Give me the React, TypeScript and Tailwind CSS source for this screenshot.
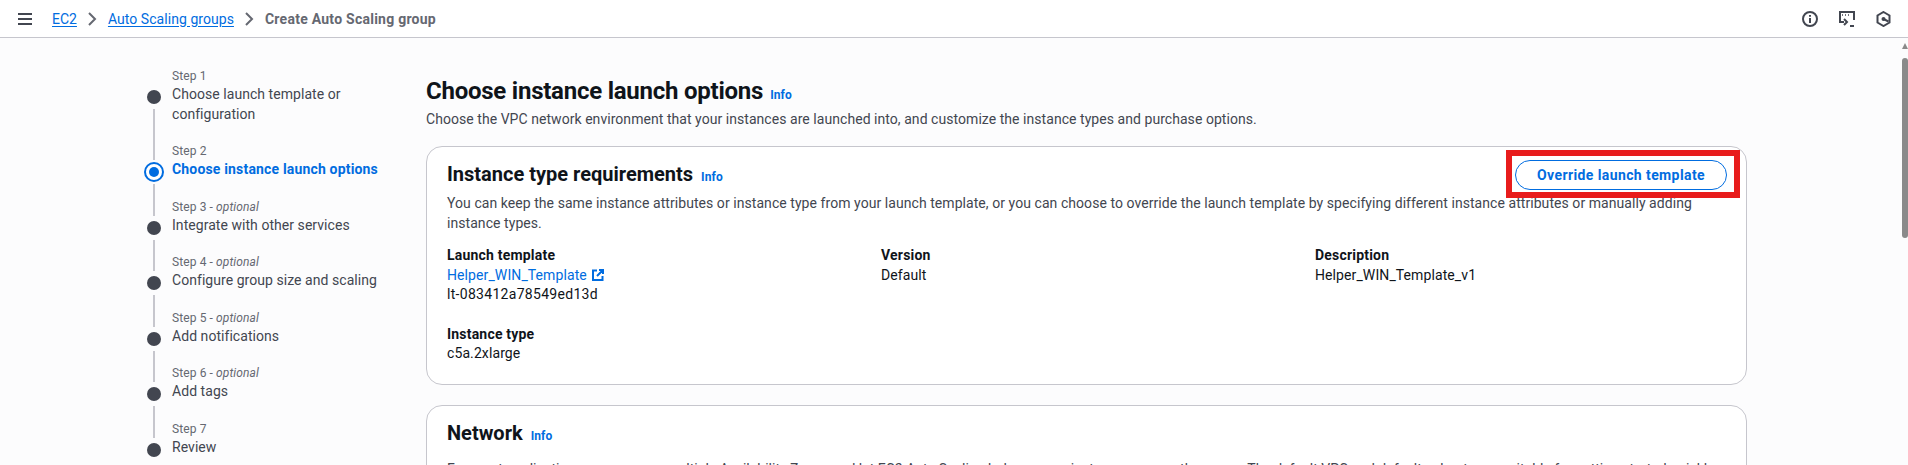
import React from "react";

const Line = ({ hidden }: { hidden?: boolean }) => (
  <div className={hidden ? "w-[2px] flex-1" : "w-[2px] flex-1 bg-[#c6c6cd]"} />
);

type Step = { n: number; optional?: boolean; title: string; active?: boolean };

const steps: Step[] = [
  { n: 1, title: "Choose launch template or configuration" },
  { n: 2, title: "Choose instance launch options", active: true },
  { n: 3, optional: true, title: "Integrate with other services" },
  { n: 4, optional: true, title: "Configure group size and scaling" },
  { n: 5, optional: true, title: "Add notifications" },
  { n: 6, optional: true, title: "Add tags" },
  { n: 7, title: "Review" },
];

function StepRow({ s, first, last }: { s: Step; first: boolean; last: boolean }) {
  return (
    <div className="flex gap-2">
      <div className="flex w-5 flex-col items-center">
        <div className="flex h-[19px] w-full flex-col items-center pb-[2px]">
          <Line hidden={first} />
        </div>
        {s.active ? (
          <div className="flex h-5 w-5 items-center justify-center rounded-full border-2 border-[#006ce0] bg-white">
            <div className="h-[10px] w-[10px] rounded-full bg-[#006ce0]" />
          </div>
        ) : (
          <div className="my-[3px] h-[14px] w-[14px] rounded-full bg-[#424650]" />
        )}
        <div className="flex w-full flex-1 flex-col items-center pt-[2px]">
          <Line hidden={last} />
        </div>
      </div>
      <div className="w-[215px] pb-[19px]">
        <div className="h-4 text-xs leading-4 tracking-[0.1px] text-[#656871]">
          Step {s.n}
          {s.optional && (
            <>
              {" - "}
              <i>optional</i>
            </>
          )}
        </div>
        <div
          className={
            s.active
              ? "mt-[1px] text-sm leading-[19.5px] font-bold tracking-[0.17px] text-[#006ce0]"
              : "mt-[1px] text-sm leading-[19.5px] tracking-[0.05px] text-[#424650]"
          }
        >
          {s.title}
        </div>
      </div>
    </div>
  );
}

const Info = ({ className }: { className: string }) => (
  <a className={"text-xs font-bold tracking-[0.1px] text-[#006ce0] " + className}>Info</a>
);

const Field = ({ label, children }: { label: string; children: React.ReactNode }) => (
  <div className="text-sm leading-[19.5px] tracking-[0.1px] text-[#0f141a]">
    <div className="font-bold tracking-[0.2px]">{label}</div>
    {children}
  </div>
);

export default function App() {
  return (
    <div className="flex h-[465px] w-[1908px] flex-col overflow-hidden bg-[#fcfcfd] font-['Roboto',sans-serif]">
      <header className="flex h-[38px] shrink-0 items-center border-b border-[#c6c6cd] bg-white pl-[18px] pr-[17px]">
        <svg width="14" height="14" viewBox="0 0 14 14" fill="none" stroke="#424650" strokeWidth="2">
          <path d="M0 2h14M0 7h14M0 12h14" />
        </svg>
        <nav className="ml-[20px] flex items-center text-sm">
          <a className="text-[#006ce0] underline underline-offset-2">EC2</a>
          <svg className="mx-[11px]" width="9" height="14" viewBox="0 0 9 14" fill="none" stroke="#656871" strokeWidth="2">
            <path d="M1 1l6 6-6 6" />
          </svg>
          <a className="tracking-[0.05px] text-[#006ce0] underline underline-offset-2">Auto Scaling groups</a>
          <svg className="mx-[11px]" width="9" height="14" viewBox="0 0 9 14" fill="none" stroke="#656871" strokeWidth="2">
            <path d="M1 1l6 6-6 6" />
          </svg>
          <span className="font-bold tracking-[0.25px] text-[#656871]">Create Auto Scaling group</span>
        </nav>
        <div className="ml-auto flex items-center gap-[21px]">
          <svg width="16" height="16" viewBox="0 0 16 16" fill="none" stroke="#424650" strokeWidth="2">
            <circle cx="8" cy="8" r="7" />
            <path d="M8 7v5M8 4v1.8" />
          </svg>
          <svg width="16" height="16" viewBox="0 0 16 16" fill="none" stroke="#424650" strokeWidth="2">
            <path d="M5 11H1V1h14v8" />
            <path d="M3 4h1M6 4h1M9 4h1" strokeWidth="1.6" />
            <path d="M5 8l3 3-3 3M11 15h4" />
          </svg>
          <svg width="15" height="16" viewBox="0 0 15 16" fill="none" stroke="#424650" strokeWidth="2">
            <path d="M7.5 1l6 3.5v7l-6 3.5-6-3.5v-7z" />
            <circle cx="7.5" cy="8" r="2" fill="#424650" stroke="none" />
            <path d="M7.5 8l5 2.5" />
          </svg>
        </div>
      </header>
      <div className="flex min-h-0 flex-1">
        <aside className="w-[426px] shrink-0 pl-[144px] pt-[30px]">
          {steps.map((s, i) => (
            <StepRow key={s.n} s={s} first={i === 0} last={i === steps.length - 1} />
          ))}
        </aside>
        <main className="w-[1321px] shrink-0 pt-[38px]">
          <div className="flex items-baseline">
            <h1 className="text-2xl leading-[30px] font-bold tracking-[-0.24px] text-[#0f141a]">Choose instance launch options</h1>
            <Info className="ml-[7px]" />
          </div>
          <p className="mt-[3px] text-sm leading-5 tracking-[0.05px] text-[#424650]">
            Choose the VPC network environment that your instances are launched into, and customize the instance types and purchase options.
          </p>
          <section className="relative mt-[17px] h-[239px] rounded-2xl border border-[#c6c6cd] bg-white px-[20px] pt-[14px]">
            <div className="flex items-baseline">
              <h2 className="text-xl leading-[26px] font-bold text-[#0f141a]">Instance type requirements</h2>
              <Info className="ml-[8px]" />
            </div>
            <p className="mt-[6px] text-sm leading-[20px] tracking-[0.06px] text-[#424650]">
              You can keep the same instance attributes or instance type from your launch template, or you can choose to override the launch template by specifying different instance attributes or manually adding instance types.
            </p>
            <div className="mt-[13px] grid grid-cols-[434px_434px_1fr]">
              <Field label="Launch template">
                <a className="flex items-center gap-[5px] text-[#006ce0]">
                  Helper_WIN_Template
                  <svg width="12" height="12" viewBox="0 0 12 12" fill="none" stroke="#006ce0" strokeWidth="2">
                    <path d="M5 1.5H1v9.5h9.5V7M7 1h4v4M11 1L5 7" />
                  </svg>
                </a>
                <div className="tracking-[0.3px]">lt-083412a78549ed13d</div>
              </Field>
              <Field label="Version">Default</Field>
              <Field label="Description">Helper_WIN_Template_v1</Field>
            </div>
            <div className="mt-[20px]">
              <Field label="Instance type">c5a.2xlarge</Field>
            </div>
            <button className="absolute right-[19px] top-[13px] flex h-[30px] w-[212px] items-center justify-center rounded-full border border-[#006ce0] bg-white text-sm font-bold tracking-[0.4px] text-[#006ce0]">
              Override launch template
            </button>
            <div className="absolute right-[6px] top-[3px] h-[48px] w-[234px] border-[6px] border-[#e81c1c]" />
          </section>
          <section className="mt-[20px] h-[200px] rounded-2xl border border-[#c6c6cd] bg-white px-[20px] pt-[14px]">
            <div className="flex items-baseline">
              <h2 className="text-xl leading-[26px] font-bold text-[#0f141a]">Network</h2>
              <Info className="ml-[8px]" />
            </div>
            <p className="mt-[13px] text-sm leading-[20px] text-[#424650]">
              For most applications, you can use multiple Availability Zones and let EC2 Auto Scaling balance your instances across the zones. The default VPC and default subnets are suitable for getting started quickly.
            </p>
          </section>
        </main>
        <div className="ml-auto flex w-[6px] shrink-0 flex-col items-center pt-[5px]">
          <div className="h-0 w-0 border-x-[3px] border-b-[6px] border-x-transparent border-b-[#8a8a8a]" />
          <div className="mt-[9px] h-[180px] w-[6px] rounded-sm bg-[#8a8a8a]" />
        </div>
      </div>
    </div>
  );
}
